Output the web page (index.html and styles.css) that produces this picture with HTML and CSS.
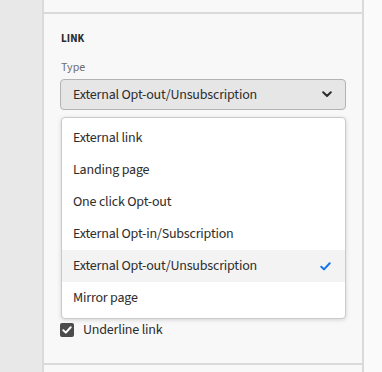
FILE: index.html
```html
<!DOCTYPE html>
<html lang="en">
<head>
  <meta charset="UTF-8" />
  <title>Link settings</title>
  <link rel="stylesheet" href="styles.css">
</head>
<body>
  <div class="layout">
    <div class="gutter"></div>

    <div class="panel">
      <div class="section-top"></div>

      <div class="section">
        <h3 class="heading">LINK</h3>

        <div class="field">
          <label class="field-label">Type</label>
          <div class="picker-wrap">
            <button class="picker">
              <span>External Opt-out/Unsubscription</span>
              <svg class="chevron" width="10" height="7" viewBox="0 0 10 7">
                <path d="M1.2 1.3 L5 5 L8.8 1.3" fill="none" stroke="#2c2c2c" stroke-width="2" stroke-linecap="round" stroke-linejoin="round"/>
              </svg>
            </button>

            <ul class="menu">
              <li class="menu-item">External link</li>
              <li class="menu-item">Landing page</li>
              <li class="menu-item">One click Opt-out</li>
              <li class="menu-item">External Opt-in/Subscription</li>
              <li class="menu-item selected">
                External Opt-out/Unsubscription
                <svg class="check" width="11" height="9" viewBox="0 0 11 9">
                  <path d="M1.3 4.8 L4 7.4 L9.7 1.3" fill="none" stroke="#1473e6" stroke-width="2" stroke-linecap="round" stroke-linejoin="round"/>
                </svg>
              </li>
              <li class="menu-item">Mirror page</li>
            </ul>
          </div>
        </div>

        <div class="covered"></div>

        <label class="checkbox">
          <span class="box">
            <svg width="10" height="8" viewBox="0 0 10 8">
              <path d="M1.3 4.2 L3.8 6.6 L8.7 1.3" fill="none" stroke="#fff" stroke-width="2" stroke-linecap="round" stroke-linejoin="round"/>
            </svg>
          </span>
          Underline link
        </label>
      </div>

      <div class="section-bottom"></div>
    </div>
  </div>
</body>
</html>
```

FILE: styles.css
```css
* {
  box-sizing: border-box;
  margin: 0;
  padding: 0;
}

body {
  font-family: 'Source Sans 3', 'Source Sans Pro', 'Lato', sans-serif;
  background: #fafafa;
  color: #2c2c2c;
  width: 382px;
  height: 372px;
  overflow: hidden;
}

.layout {
  display: flex;
  height: 372px;
}

.gutter {
  width: 42px;
  background: #e8e8e8;
}

.panel {
  width: 322px;
  background: #f8f8f8;
  border-left: 2px solid #dadada;
  border-right: 2px solid #dadada;
  display: flex;
  flex-direction: column;
}

.section-top {
  height: 14px;
  border-bottom: 2px solid #dadada;
}

.section {
  padding: 0 16px;
}

.heading {
  font-size: 11px;
  font-weight: 700;
  letter-spacing: 0.1px;
  padding-top: 18px;
  line-height: 14px;
  margin-left: 1px;
}

.field {
  margin-top: 14px;
}

.field-label {
  display: block;
  font-size: 12px;
  color: #6e6e6e;
  line-height: 16px;
  margin-left: 1px;
  margin-bottom: 3px;
}

.picker-wrap {
  position: relative;
}

.picker {
  width: 286px;
  height: 31px;
  display: flex;
  align-items: center;
  justify-content: space-between;
  padding: 0 12px 0 12px;
  font-family: inherit;
  font-size: 14px;
  letter-spacing: -0.2px;
  color: #2c2c2c;
  background: #e6e6e6;
  border: 1px solid #b3b3b3;
  border-radius: 4px;
}

.chevron {
  margin-right: 1px;
}

.menu {
  position: absolute;
  top: 38px;
  left: 1px;
  width: 285px;
  list-style: none;
  background: #fff;
  border: 1px solid #cacaca;
  border-radius: 4px;
  box-shadow: 0 1px 4px rgba(0, 0, 0, 0.15);
  padding: 4px 0;
  z-index: 2;
}

.menu-item {
  height: 32px;
  display: flex;
  align-items: center;
  justify-content: space-between;
  padding: 0 14px 0 11px;
  font-size: 14px;
  letter-spacing: -0.2px;
}

.menu-item.selected {
  background: #f3f3f3;
}

.covered {
  height: 212px;
}

.checkbox {
  display: flex;
  align-items: center;
  gap: 9px;
  font-size: 14px;
  letter-spacing: -0.2px;
  line-height: 16px;
}

.box {
  width: 14px;
  height: 14px;
  border-radius: 2px;
  background: #4b4b4b;
  display: flex;
  align-items: center;
  justify-content: center;
}

.section-bottom {
  flex: 1;
  margin-top: 25px;
  border-top: 2px solid #dadada;
}
```
